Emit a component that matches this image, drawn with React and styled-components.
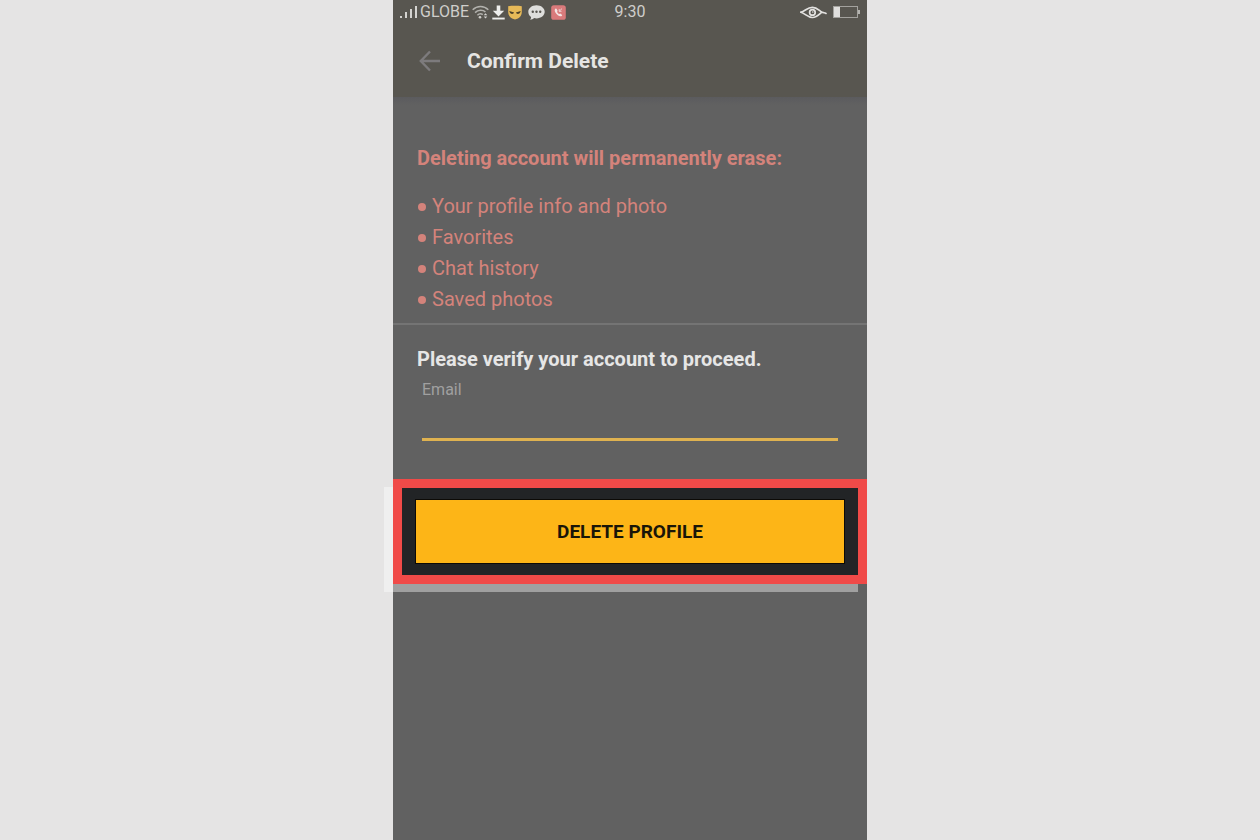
// src/App.jsx
import React, { useState } from 'react';
import styled, { createGlobalStyle } from 'styled-components';

const GlobalStyle = createGlobalStyle`
  * {
    box-sizing: border-box;
  }

  body {
    margin: 0;
    background-color: #e5e4e4;
    font-family: Roboto, 'Liberation Sans', sans-serif;
  }
`;

// === LAYOUT ===
const Page = styled.div`
  display: flex;
  justify-content: center;
  min-height: 100vh;
`;

const Phone = styled.div`
  display: flex;
  flex-direction: column;
  width: 100%;
  max-width: 474px;
  background-color: #616161;
`;

const TopArea = styled.header`
  background-color: #585650;
`;

// === STATUS BAR ===
const StatusBar = styled.div`
  display: grid;
  grid-template-columns: 1fr auto 1fr;
  align-items: center;
  height: 24px;
  padding: 0 7px;
  color: #cfcecb;
  font-size: 16px;
  line-height: 24px;
`;

const StatusGroup = styled.div`
  display: flex;
  align-items: center;
  justify-content: ${({ $end }) => ($end ? 'flex-end' : 'flex-start')};
  gap: ${({ $gap }) => $gap}px;
`;

// === APP BAR ===
const AppBar = styled.div`
  display: flex;
  align-items: center;
  gap: 26px;
  height: 73px;
  padding: 0 24px;
`;

const BackButton = styled.button`
  display: flex;
  padding: 0;
  border: none;
  background: none;
  color: #7d7b7d;
  cursor: pointer;
`;

const Title = styled.h1`
  margin: 0;
  color: #e6e5e3;
  font-size: 21px;
  line-height: 24px;
  font-weight: 700;
`;

// === CONTENT ===
const Warning = styled.section`
  padding: 48px 24px 8px;
  border-bottom: 2px solid #747474;
  background-image: linear-gradient(#5b5b5e, #616161 8px);
  color: #d4837b;
`;

const Heading = styled.h2`
  margin: 0;
  font-size: 20px;
  line-height: 26px;
  font-weight: 700;
`;

const List = styled.ul`
  margin: 20px 0 0;
  padding: 0;
  list-style: none;
`;

const Item = styled.li`
  display: flex;
  align-items: center;
  gap: 6px;
  font-size: 20px;
  line-height: 31px;

  &:before {
    content: '';
    width: 8px;
    height: 8px;
    margin-left: 1px;
    border-radius: 50%;
    background-color: #d4837b;
  }
`;

const Form = styled.form`
  padding-top: 21px;
  color: #e6e6e6;
`;

const Field = styled.div`
  display: flex;
  flex-direction: column;
  padding: 0 5px;
`;

const VerifyBlock = styled.div`
  padding: 0 24px;
`;

const Label = styled.label`
  margin-top: 8px;
  color: #a0a0a0;
  font-size: 16px;
  line-height: 20px;
`;

const Input = styled.input`
  width: 100%;
  height: 41px;
  padding: 8px 0;
  border: none;
  border-bottom: 3px solid #dfb250;
  background: none;
  color: #e6e6e6;
  font-family: inherit;
  font-size: 20px;
  outline: none;
`;

const Highlight = styled.div`
  margin-top: 38px;
  padding: 12px 14px;
  border: 9px solid #f04a48;
  background-color: #222426;
  box-shadow: -9px 8px 0 rgba(255, 255, 255, 0.4);
`;

const DeleteButton = styled.button`
  display: block;
  width: 100%;
  height: 63px;
  border: none;
  background-color: #fdb517;
  box-shadow: 0 0 0 1px #0c0a06;
  color: #1a1508;
  font-family: inherit;
  font-size: 19px;
  font-weight: 700;
  text-transform: uppercase;
  cursor: pointer;
`;

// === ICONS ===
const SignalIcon = () => (
  <svg width="18" height="14" viewBox="0 0 18 14" fill="#d4d3d0">
    <rect x="0" y="11" width="2" height="2" />
    <rect x="5" y="7" width="2" height="6" />
    <rect x="10" y="4" width="2" height="9" />
    <rect x="15" y="1" width="2" height="12" />
  </svg>
);

const WifiIcon = () => (
  <svg width="17" height="14" viewBox="0 0 17 14" fill="none" stroke="#b3b2ae" strokeWidth="1.6">
    <path d="M0.7 4.8C5 0.4 12 0.4 16.3 4.8" />
    <path d="M3.1 7.600C6 4.600 11 4.600 13.4 7" />
    <path d="M5.4 10.200C7.2 8.400 9.200 8.400 10.800 9.700" />
    <circle cx="8" cy="12.300" r="1.300" fill="#cfcecb" stroke="none" />
    <path d="M13.500 8.200l1.800 2h-3.600zM13.500 13.400l1.800-2h-3.600z" fill="#d4d3d0" stroke="none" />
  </svg>
);

const DownloadIcon = () => (
  <svg width="13" height="15" viewBox="0 0 13 15" fill="#eeeeec">
    <path d="M4.7 0.5h3.6v5.2h3.9L6.5 11.4 0.8 5.7h3.9z" />
    <rect x="0.3" y="12.6" width="12.4" height="1.9" />
  </svg>
);

const MaskIcon = () => (
  <svg width="14" height="15" viewBox="0 0 14 15">
    <path d="M0.2 1.300C4.2 0.700 9.8 0.700 13.8 1.300V7c0 3.600-2.400 6.600-6.800 7.400C2.600 13.600 0.2 10.600 0.2 7z" fill="#e6b958" />
    <path d="M1.300 6l4.800 1.600c-.6 2.200-4.300 2-4.800-1.600zM12.700 6L7.900 7.600c.6 2.200 4.300 2 4.800-1.600z" fill="#4b4028" />
  </svg>
);

const ChatIcon = () => (
  <svg width="17" height="15" viewBox="0 0 17 15">
    <path d="M8.5 0.2c4.600 0 8.200 2.900 8.200 6.600s-3.600 6.600-8.200 6.600c-.8 0-1.600-.1-2.400-.3-1 1-2.400 1.600-4 1.700.7-.8 1-1.700 1-2.800C1.300 10.800 0.3 9 0.3 6.800 0.3 3.100 3.900 0.200 8.500 0.200z" fill="#dededc" />
    <g fill="#585650">
      <circle cx="4.800" cy="6.800" r="1.200" />
      <circle cx="8.500" cy="6.800" r="1.200" />
      <circle cx="12.200" cy="6.800" r="1.200" />
    </g>
  </svg>
);

const CallIcon = () => (
  <svg width="15" height="15" viewBox="0 0 15 15">
    <rect x="0.2" y="0.2" width="14.600" height="14.600" rx="2.600" fill="#d97a7b" />
    <path d="M4.500 3.600c-1.300 1-1 3 .6 5s3.900 3.400 5.700 2.300l.4-.9-1.900-1.500-1.100.6c-.9-.4-1.800-1.400-2.200-2.300l.7-.9-1.200-2.200z" fill="#f3e4e3" />
    <path d="M11 3.600L8.300 6.200M8.200 4v2.300h2.300" fill="none" stroke="#f3e4e3" strokeWidth="0.8" />
  </svg>
);

const EyeIcon = () => (
  <svg width="27" height="13" viewBox="0 0 27 13" fill="none" stroke="#e3e2e0" strokeLinecap="round">
    <path d="M1 6.200C5.200 4.800 7.600 1.300 12.400 1.300c4.600 0 6.600 3.100 9.200 4.600 1.500.8 3 .8 4.400 1.500" strokeWidth="1.700" />
    <path d="M1 6.200C5 7.400 7.600 11.500 12.400 11.500c4.600 0 6.800-3.200 9.200-5.200" strokeWidth="1.700" />
    <circle cx="12.400" cy="6.400" r="2.800" strokeWidth="1.700" />
    <circle cx="12.800" cy="6" r="0.800" fill="#e3e2e0" stroke="none" />
  </svg>
);

const BatteryIcon = () => (
  <svg width="27" height="12" viewBox="0 0 27 12">
    <rect x="0.500" y="0.500" width="24" height="11" fill="none" stroke="#a3a29e" />
    <rect x="1" y="1" width="6" height="10" fill="#e0dfdd" />
    <rect x="25" y="4" width="2" height="4" fill="#b5b4b0" />
  </svg>
);

const BackIcon = () => (
  <svg width="24" height="24" viewBox="0 0 24 24" fill="none" stroke="currentColor" strokeWidth="2.400">
    <path d="M13 2.500L3.800 12l9.200 9.500M4 12h19" />
  </svg>
);

const erasedItems = ['Your profile info and photo', 'Favorites', 'Chat history', 'Saved photos'];

function App() {
  const [email, setEmail] = useState('');

  return (
    <>
      <GlobalStyle />
      <Page>
        <Phone>
          <TopArea>
            <StatusBar>
              <StatusGroup $gap={6}>
                <StatusGroup $gap={3}>
                  <StatusGroup $gap={2}>
                    <SignalIcon />
                    <span>GLOBE</span>
                  </StatusGroup>
                  <WifiIcon />
                  <DownloadIcon />
                  <MaskIcon />
                </StatusGroup>
                <ChatIcon />
                <CallIcon />
              </StatusGroup>
              <span>9:30</span>
              <StatusGroup $end $gap={6}>
                <EyeIcon />
                <BatteryIcon />
              </StatusGroup>
            </StatusBar>
            <AppBar>
              <BackButton type="button" aria-label="Back">
                <BackIcon />
              </BackButton>
              <Title>Confirm Delete</Title>
            </AppBar>
          </TopArea>

          <main>
            <Warning>
              <Heading>Deleting account will permanently erase:</Heading>
              <List>
                {erasedItems.map((item) => (
                  <Item key={item}>{item}</Item>
                ))}
              </List>
            </Warning>

            <Form onSubmit={(e) => e.preventDefault()}>
              <VerifyBlock>
                <Heading>Please verify your account to proceed.</Heading>
                <Field>
                  <Label htmlFor="email">Email</Label>
                  <Input
                    id="email"
                    type="email"
                    value={email}
                    onChange={(e) => setEmail(e.target.value)}
                  />
                </Field>
              </VerifyBlock>
              <Highlight>
                <DeleteButton type="submit">Delete Profile</DeleteButton>
              </Highlight>
            </Form>
          </main>
        </Phone>
      </Page>
    </>
  );
}

export default App;
